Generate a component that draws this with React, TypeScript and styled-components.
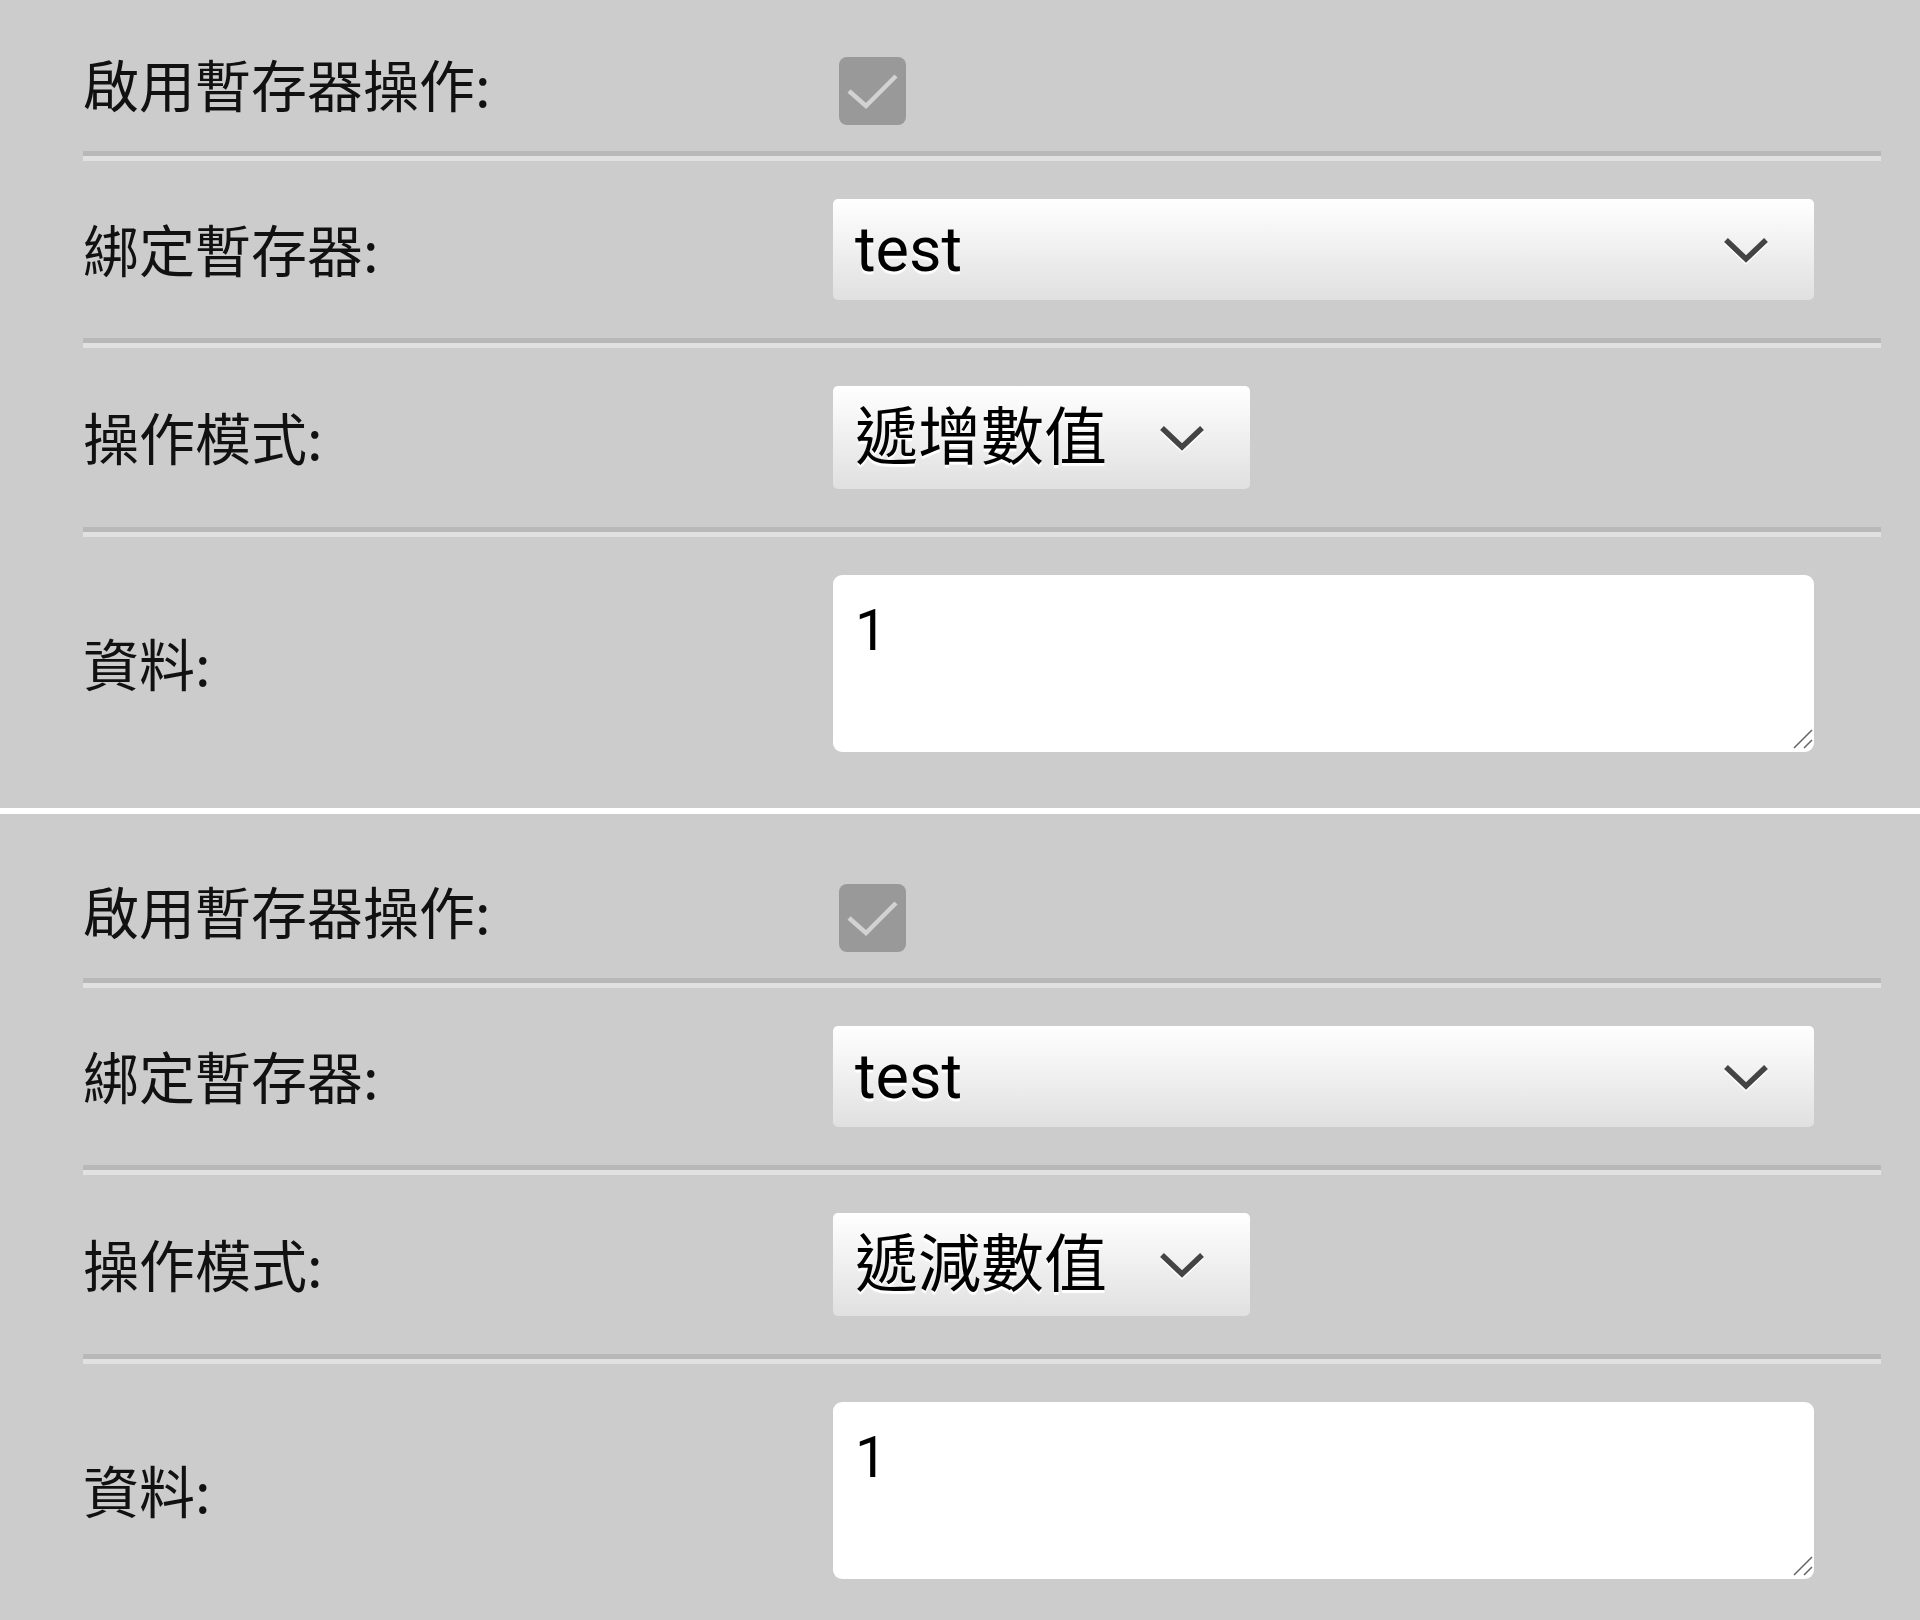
import React, { useState } from 'react';
import styled, { createGlobalStyle } from 'styled-components';

type Action = {
  enabled: boolean;
  register: string;
  mode: string;
  data: string;
};

const registers = ['test'];
const modes = ['遞增數值', '遞減數值', '設定數值'];

const initialActions: Action[] = [
  { enabled: true, register: 'test', mode: '遞增數值', data: '1' },
  { enabled: true, register: 'test', mode: '遞減數值', data: '1' }
];

export default () => {
  const [ actions, setActions ] = useState(initialActions);

  const update = (i: number, patch: Partial<Action>) => {
    setActions(actions.map((a, j) => (j === i ? { ...a, ...patch } : a)));
  };

  return <>
    <GlobalStyle />
    <List>
      {actions.map((a, i) => (
        <Section key={i}>
          <Row $pad="70px 0 26px">
            <Label $lift>啟用暫存器操作:</Label>
            <CheckBox role="checkbox" aria-checked={a.enabled} aria-disabled>
              {a.enabled ? (
                <svg width="67" height="68" viewBox="0 0 67 68">
                  <polyline points="10,34 27,49 57,19" fill="none" stroke="#d2d2d2" strokeWidth="4.5" />
                </svg>
              ) : undefined}
            </CheckBox>
          </Row>
          <Divider />
          <Row>
            <Label>綁定暫存器:</Label>
            <SelectWrap $width={981}>
              <Select $height={101} value={a.register} onChange={(e) => update(i, { register: e.target.value })}>
                {registers.map((r) => <option key={r}>{r}</option>)}
              </Select>
              <Chevron />
            </SelectWrap>
          </Row>
          <Divider />
          <Row>
            <Label>操作模式:</Label>
            <SelectWrap $width={417}>
              <Select $height={103} value={a.mode} onChange={(e) => update(i, { mode: e.target.value })}>
                {modes.map((m) => <option key={m}>{m}</option>)}
              </Select>
              <Chevron />
            </SelectWrap>
          </Row>
          <Divider />
          <Row $pad="38px 0 56px">
            <Label>資料:</Label>
            <AreaWrap>
              <DataArea value={a.data} onChange={(e) => update(i, { data: e.target.value })} />
              <Grip width="20" height="20" viewBox="0 0 20 20">
                <line x1="1" y1="19" x2="19" y2="1" stroke="#666" strokeWidth="1.6" />
                <line x1="11" y1="19" x2="19" y2="11" stroke="#666" strokeWidth="1.6" />
              </Grip>
            </AreaWrap>
          </Row>
        </Section>
      ))}
    </List>
  </>;
}

const Chevron = () => (
  <ChevronIcon width="46" height="26" viewBox="0 0 46 26">
    <polyline points="3,3 23,22 43,3" fill="none" stroke="#444" strokeWidth="5.5" />
  </ChevronIcon>
);

const GlobalStyle = createGlobalStyle`
  html, body {
    margin: 0;
    padding: 0;
    background: #cccccc;
  }
  body {
    font-family: Roboto, "Noto Sans CJK TC", sans-serif;
    overflow: hidden;
  }
`;

const List = styled.div`
  margin-top: -13px;
`;

const Section = styled.section`
  padding: 0 39px 0 83px;
  border-bottom: 6px solid #ffffff;
`;

const Row = styled.div<{ $pad?: string }>`
  display: flex;
  align-items: center;
  padding: ${(p) => p.$pad || '38px 0'};
`;

const Label = styled.div<{ $lift?: boolean }>`
  width: 750px;
  flex: none;
  font-family: "Noto Sans CJK TC", sans-serif;
  font-size: 56px;
  line-height: 66px;
  color: #111;
  margin-top: ${(p) => (p.$lift ? '-16px' : '-4px')};
`;

const CheckBox = styled.span`
  display: block;
  width: 67px;
  height: 68px;
  margin-left: 6px;
  border-radius: 8px;
  background: #999999;
  svg {
    display: block;
  }
`;

const Divider = styled.hr`
  margin: 0;
  height: 0;
  border: none;
  border-top: 5px solid #b8b8b8;
  border-bottom: 5px solid #e1e1e1;
`;

const SelectWrap = styled.div<{ $width: number }>`
  position: relative;
  width: ${(p) => p.$width}px;
`;

const Select = styled.select<{ $height: number }>`
  appearance: none;
  display: block;
  width: 100%;
  height: ${(p) => p.$height}px;
  margin: 0;
  padding: 0 90px 0 22px;
  border: none;
  border-radius: 5px;
  background: linear-gradient(#ffffff, #e0e0e0);
  font-family: Roboto, "Noto Sans CJK TC", sans-serif;
  font-size: 63px;
  color: #000;
  text-shadow: 0 3px 1px #ffffff;
  outline: none;
`;

const ChevronIcon = styled.svg`
  position: absolute;
  right: 45px;
  top: 50%;
  transform: translateY(-50%);
  filter: drop-shadow(0 2px 0 #ffffff);
  pointer-events: none;
`;

const AreaWrap = styled.div`
  position: relative;
  width: 981px;
`;

const DataArea = styled.textarea`
  display: block;
  box-sizing: border-box;
  width: 100%;
  height: 177px;
  margin: 0;
  padding: 22px 22px;
  border: none;
  border-radius: 9px;
  background: #ffffff;
  font-family: Roboto, "Noto Sans CJK TC", sans-serif;
  font-size: 57px;
  color: #000;
  resize: none;
  outline: none;
`;

const Grip = styled.svg`
  position: absolute;
  right: 1px;
  bottom: 3px;
  pointer-events: none;
`;
